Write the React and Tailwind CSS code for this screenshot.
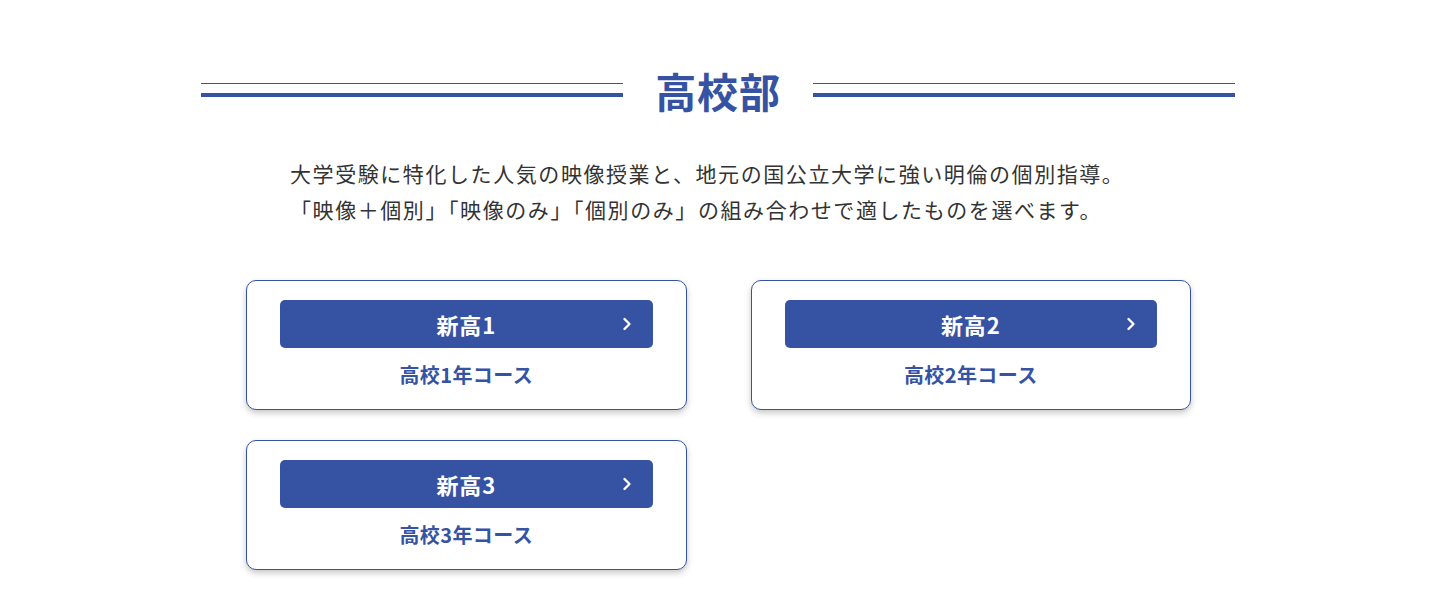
import React from 'react';

const courses = [
  { id: 1, title: '新高1', sub: '高校1年コース' },
  { id: 2, title: '新高2', sub: '高校2年コース' },
  { id: 3, title: '新高3', sub: '高校3年コース' },
];

function Chevron() {
  return (
    <svg width="12" height="14" viewBox="0 0 12 14" fill="none">
      <polyline points="3.5,2 8.5,7 3.5,12" stroke="white" strokeWidth="2.4" strokeLinecap="round" strokeLinejoin="round" />
    </svg>
  );
}

export default function App() {
  return (
    <div
      className="min-h-screen bg-white"
      style={{ fontFamily: '"Noto Sans CJK JP", "Noto Sans", sans-serif' }}
    >
      <div className="w-[1036px] mx-auto pt-[60px] pb-6">
        {/* 見出し */}
        <div className="flex items-center gap-8 pl-[2px]">
          <div className="flex-1 h-[14px] border-t border-b-4 border-[#3653a3]"></div>
          <h2 className="text-[41px] leading-[60px] font-bold text-[#3653a3] tracking-[0.02em]">高校部</h2>
          <div className="flex-1 h-[14px] border-t border-b-4 border-[#3653a3]"></div>
        </div>

        <p className="mt-[35px] pl-[91px] text-[21px] leading-[36px] tracking-[0.075em] text-[#333]">
          大学受験に特化した人気の映像授業と、地元の国公立大学に強い明倫の個別指導。
          <br />
          「映像＋個別」「映像のみ」「個別のみ」の組み合わせで適したものを選べます。
        </p>

        <div className="mt-[53px] ml-[47px] w-[945px] grid grid-cols-2 gap-x-16 gap-y-[30px]">
          {courses.map((c) => (
            <a
              key={c.id}
              href="#"
              className="block bg-white border border-[#3653a3] rounded-[10px] px-[33px] pt-[19px] pb-[19px] shadow-[0_3px_6px_rgba(0,0,0,0.22)]"
            >
              <div className="relative h-12 rounded-[5px] bg-[#3653a3] flex items-center justify-center">
                <span className="text-white text-[22px] font-bold tracking-[0.04em]">{c.title}</span>
                <span className="absolute right-[20px] top-1/2 -translate-y-1/2 flex">
                  <Chevron />
                </span>
              </div>
              <div className="mt-3 text-center text-[20px] leading-[30px] font-bold text-[#3653a3] tracking-[0.02em]">
                {c.sub}
              </div>
            </a>
          ))}
        </div>
      </div>
    </div>
  );
}
